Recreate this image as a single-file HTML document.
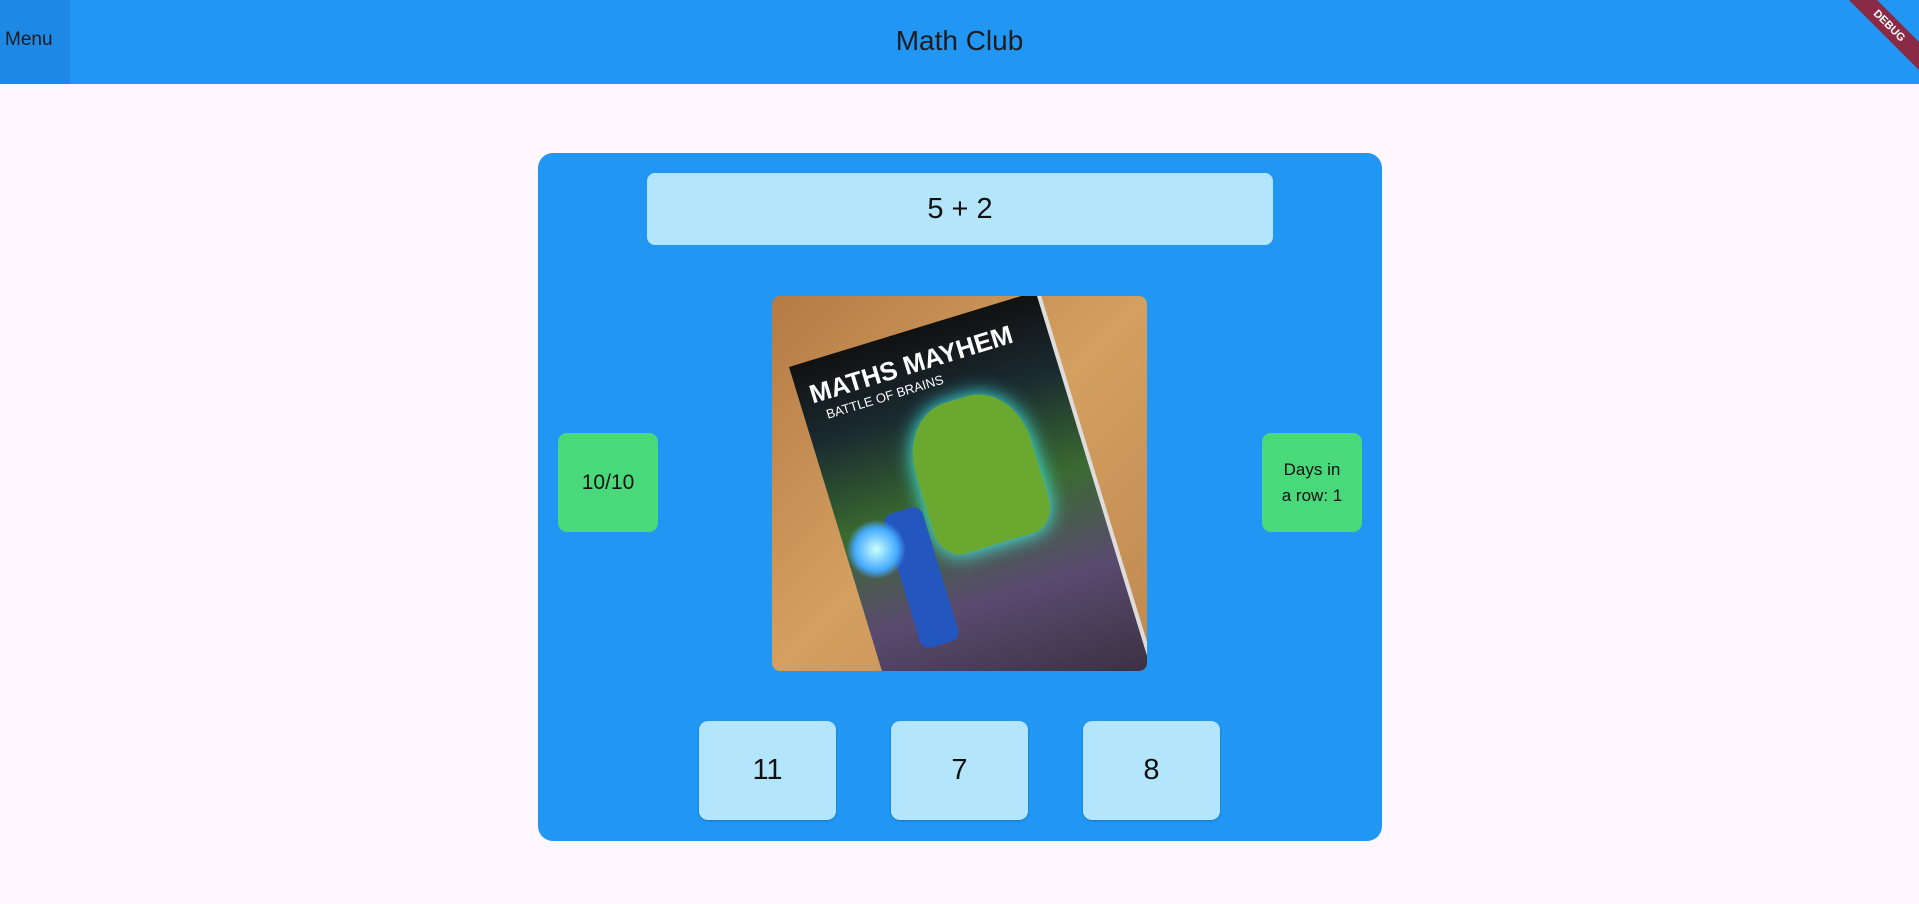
<!DOCTYPE html>
<html><head><style>
*{margin:0;padding:0;box-sizing:border-box}
body{width:1919px;height:904px;background:#fef7ff;font-family:"Liberation Sans",Roboto,sans-serif;position:relative;overflow:hidden;color:#1d1b20}
.hdr{position:absolute;left:0;top:0;width:1919px;height:84px;background:#2196f3}
.menu{position:absolute;left:0;top:0;width:70px;height:84px;background:#1e88e5;font-size:19px;line-height:80px;padding-left:5px}
.title{position:absolute;left:0;width:1919px;top:0;line-height:82px;text-align:center;font-size:28px}
.card{position:absolute;left:538px;top:153px;width:844px;height:688px;background:#2196f3;border-radius:15px}
.q{position:absolute;left:647px;top:173px;width:626px;height:72px;background:#b3e5fc;border-radius:8px;text-align:center;line-height:72px;font-size:29px;color:#111}
.g{position:absolute;top:433px;width:100px;height:99px;background:#4ad97a;border-radius:9px;display:flex;align-items:center;justify-content:center;text-align:center;color:#111}
.a{position:absolute;top:721px;width:137px;height:99px;background:#b3e5fc;border-radius:9px;text-align:center;line-height:99px;font-size:29px;color:#111;box-shadow:0 1px 2px rgba(0,0,0,.2)}
.img{position:absolute;left:772px;top:296px;width:375px;height:375px;border-radius:8px;overflow:hidden;background:linear-gradient(135deg,#b57a45,#d4a060 50%,#c08850)}
.poster{position:absolute;left:17px;top:71px;width:262px;height:400px;background:linear-gradient(180deg,#111 0%,#1a2a30 20%,#3a6a30 45%,#5a4a70 70%,#3a3040 100%);transform:rotate(-17deg);transform-origin:top left;border-right:4px solid #ddd}
.debug{position:absolute;right:-30px;top:16px;width:120px;height:20px;background:#8b2a45;transform:rotate(45deg);color:#fff;font-size:11px;font-weight:bold;text-align:center;line-height:20px}
</style></head><body>
<div class="hdr"></div>
<div class="menu">Menu</div>
<div class="title">Math Club</div>
<div class="debug">DEBUG</div>
<div class="card"></div>
<div class="q">5 + 2</div>
<div class="img"><div class="poster"><div style="color:#fff;font-weight:bold;font-size:26px;padding:18px 0 0 12px;white-space:nowrap">MATHS MAYHEM</div><div style="color:#fff;font-size:13px;padding-left:22px;white-space:nowrap">BATTLE OF BRAINS</div><div style="position:absolute;left:90px;top:80px;width:120px;height:150px;background:#6aa830;border-radius:40% 40% 20% 20%;box-shadow:0 0 20px #4ff"></div><div style="position:absolute;left:45px;top:170px;width:40px;height:140px;background:#2456c0;border-radius:10px"></div><div style="position:absolute;left:0;top:170px;width:60px;height:60px;border-radius:50%;background:radial-gradient(#cff,#4af 50%,transparent 70%)"></div></div></div>
<div class="g" style="left:558px;font-size:21px">10/10</div>
<div class="g" style="left:1262px;font-size:17px;line-height:26px">Days in<br>a row: 1</div>
<div class="a" style="left:699px">11</div>
<div class="a" style="left:891px">7</div>
<div class="a" style="left:1083px">8</div>
</body></html>
